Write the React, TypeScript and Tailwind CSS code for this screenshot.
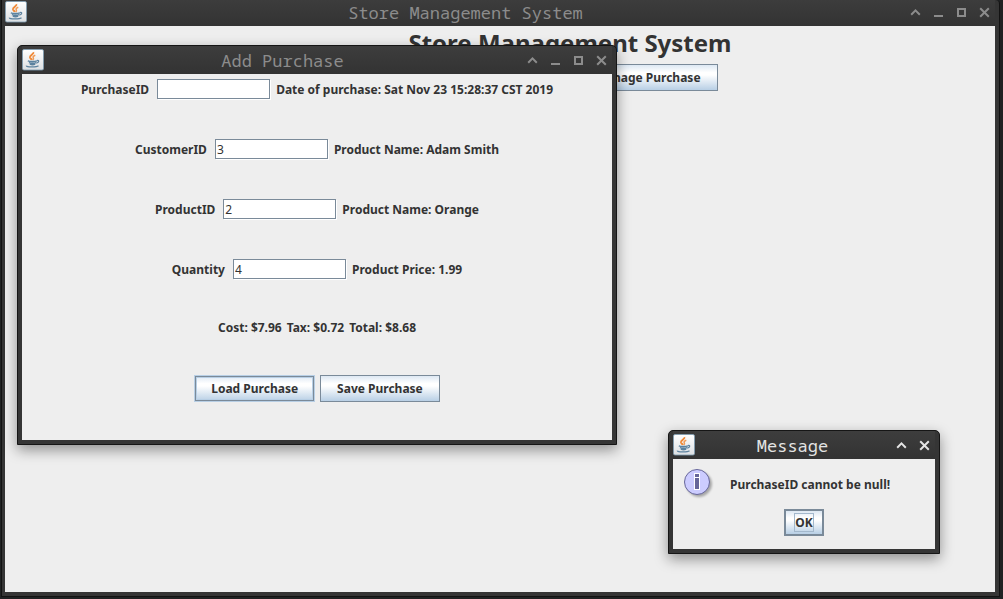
import type { ReactNode } from "react";

function JavaIcon() {
  return (
    <svg width="22" height="22" viewBox="0 0 22 22" className="block shrink-0" aria-hidden="true">
      <defs>
        <linearGradient id="tile" x1="0" y1="0" x2="0" y2="1">
          <stop offset="0" stopColor="#ffffff" />
          <stop offset="1" stopColor="#dcdfe2" />
        </linearGradient>
      </defs>
      <rect x="0.5" y="0.5" width="21" height="20.5" rx="1.5" fill="url(#tile)" stroke="#7f9db3" strokeOpacity="0.8" />
      <path d="M11.4 3.2c.8 2.100-3.900 3-3.400 5.200.3 1.100 1.500 1.600 1.800 2.600" fill="none" stroke="#f08a38" strokeWidth="1.900" />
      <path d="M13.300 6.200c-2 .8-2.700 1.600-2 2.600.5.800.2 1.500-.6 2.200" fill="none" stroke="#f09a55" strokeWidth="1.500" />
      <path d="M5.800 11.900c2 .8 7 .8 9.100-.1M6.900 13.600c2 .7 5.500.7 7.300 0M7.800 15.200c1.600.6 3.800.6 5.400 0" fill="none" stroke="#5c829f" strokeWidth="1.400" />
      <path d="M14.900 11.600c2.500-.7 2.600 1.700-.6 2.600" fill="none" stroke="#5c829f" strokeWidth="1.200" />
      <path d="M4.500 16.600c-1 1.600 10 1.800 12 .1" fill="none" stroke="#5c829f" strokeWidth="1.300" />
    </svg>
  );
}

function Glyph({ kind }: { kind: "shade" | "minimize" | "maximize" | "close" }) {
  return (
    <svg width="11" height="11" viewBox="0 0 11 11" fill="none" stroke="currentColor" strokeWidth="2" className="block" aria-hidden="true">
      {kind === "shade" && <path d="M1.200 7.700 5.500 3.400 9.800 7.700" />}
      {kind === "minimize" && <path d="M1 9H10" />}
      {kind === "maximize" && <path d="M2 2H9V9H2Z" />}
      {kind === "close" && <path d="M1.200 1.200 9.800 9.800M9.800 1.200 1.200 9.800" />}
    </svg>
  );
}

function WindowButton({ kind, label }: { kind: "shade" | "minimize" | "maximize" | "close"; label: string }) {
  return (
    <button type="button" aria-label={label} className="flex w-[23px] items-center justify-center">
      <Glyph kind={kind} />
    </button>
  );
}

function TitleBar({ title, active = false, full = true }: { title: string; active?: boolean; full?: boolean }) {
  return (
    <div
      className={`flex h-7 items-center bg-gradient-to-b from-[#3d3d3d] to-[#333333] ${active ? "text-[#e4e4e4]" : "text-[#8c8c8c]"}`}
    >
      <JavaIcon />
      <div className="flex-1 pt-[2px] text-center font-['Noto_Sans_Mono','DejaVu_Sans_Mono','Liberation_Mono',monospace] text-[17px] leading-5 font-normal whitespace-nowrap">
        {title}
      </div>
      <div className="-mr-px flex pt-px">
        <WindowButton kind="shade" label="Shade" />
        {full && <WindowButton kind="minimize" label="Minimize" />}
        {full && <WindowButton kind="maximize" label="Maximize" />}
        <WindowButton kind="close" label="Close" />
      </div>
    </div>
  );
}

const buttonFace =
  "bg-[linear-gradient(to_bottom,#dde8f3_0%,#ffffff_30%,#ffffff_40%,#b8cfe5_100%)] h-[27px] text-xs font-bold whitespace-nowrap text-[#333333]";

function Field({ id, label, value, children }: { id: string; label: string; value: string; children: ReactNode }) {
  return (
    <div className="flex h-[60px] items-start justify-center gap-[6px] pt-[5px] leading-[22px]">
      <label htmlFor={id} className="pr-[2px]">
        {label}
      </label>
      <input
        id={id}
        type="text"
        defaultValue={value}
        className="h-5 w-[113px] rounded-none border border-[#7a8a99] bg-white px-px text-xs font-normal text-[#333333] shadow-[1px_1px_0_#ffffff] outline-none"
      />
      <span>{children}</span>
    </div>
  );
}

function PurchaseWindow() {
  return (
    <section className="absolute top-[45px] left-[17px] w-[600px] rounded-t-[5px] border border-[#151515] bg-[#353535] px-1 pb-1 shadow-[0_5px_14px_rgba(0,0,0,0.4)]">
      <TitleBar title="Add Purchase" />
      <form className="h-[366px] bg-[#eeeeee]" onSubmit={(e) => e.preventDefault()}>
        <Field id="purchase-id" label="PurchaseID" value="">
          Date of purchase: Sat Nov 23 15:28:37 CST 2019
        </Field>
        <Field id="customer-id" label="CustomerID" value="3">
          Product Name: Adam Smith
        </Field>
        <Field id="product-id" label="ProductID" value="2">
          Product Name: Orange
        </Field>
        <Field id="quantity" label="Quantity" value="4">
          Product Price: 1.99
        </Field>
        <div className="flex h-14 items-start justify-center gap-[5px] pt-[6px] leading-4">
          <span>Cost: $7.96</span>
          <span>Tax: $0.72</span>
          <span>Total: $8.68</span>
        </div>
        <div className="flex justify-center gap-[5px] pt-[5px]">
          <button type="button" className={`${buttonFace} border border-[#b8cfe5] p-0 shadow-[inset_0_0_0_1px_#7a8a99,inset_0_0_0_2px_#b8cfe5]`}>
            <span className="px-4">Load Purchase</span>
          </button>
          <button type="submit" className={`${buttonFace} border border-[#7a8a99] p-0`}>
            <span className="px-4">Save Purchase</span>
          </button>
        </div>
      </form>
    </section>
  );
}

function InfoIcon() {
  return (
    <svg width="32" height="32" viewBox="0 0 32 32" className="block drop-shadow-[2px_2px_1px_rgba(0,0,0,0.3)]" aria-hidden="true">
      <circle cx="13" cy="13" r="12.500" fill="#ccccff" stroke="#666699" />
      <path d="M10 4h6v17h-6z" fill="#ffffff" />
      <path d="M11 5h4v3h-4zM11 9h4v11h-4z" fill="#666699" />
    </svg>
  );
}

function MessageWindow() {
  return (
    <section
      role="alertdialog"
      aria-label="Message"
      className="absolute top-[430px] left-[668px] w-[272px] rounded-t-[5px] border border-[#151515] bg-[#353535] px-1 pb-1 shadow-[0_5px_14px_rgba(0,0,0,0.4)]"
    >
      <TitleBar title="Message" active full={false} />
      <div className="h-[90px] bg-[#eeeeee] pt-[10px]">
        <div className="flex h-10 items-start gap-[14px] pl-[11px]">
          <InfoIcon />
          <p className="pt-2 leading-4">PurchaseID cannot be null!</p>
        </div>
        <div className="flex justify-center">
          <button type="button" className={`${buttonFace} flex w-10 items-center justify-center border-2 border-[#7a8a99] p-0`}>
            <span className="border border-[#a3b8cc] leading-[17px]">OK</span>
          </button>
        </div>
      </div>
    </section>
  );
}

export default function App() {
  return (
    <div className="relative flex min-h-screen flex-col bg-[#202223] pr-[3px] pb-[2px] pl-px font-['Noto_Sans','Liberation_Sans',sans-serif] text-xs font-bold text-[#333333]">
      <main className="flex flex-1 flex-col rounded-tr-[4px] border-x border-b border-[#121212] bg-[#353535] pr-1 pb-1 pl-[3px]">
        <div className="-mt-[2px]">
          <TitleBar title="Store Management System" />
        </div>
        <div className="flex-1 bg-[#eeeeee]">
          <h1 className="pt-[1px] pl-[140px] text-center text-2xl leading-8 font-bold">Store Management System</h1>
          <div className="flex justify-center pt-[5px] pl-[295px]">
            <button type="button" className={`${buttonFace} border border-[#7a8a99] p-0`}>
              <span className="px-4">Manage Purchase</span>
            </button>
          </div>
        </div>
      </main>
      <PurchaseWindow />
      <MessageWindow />
    </div>
  );
}
